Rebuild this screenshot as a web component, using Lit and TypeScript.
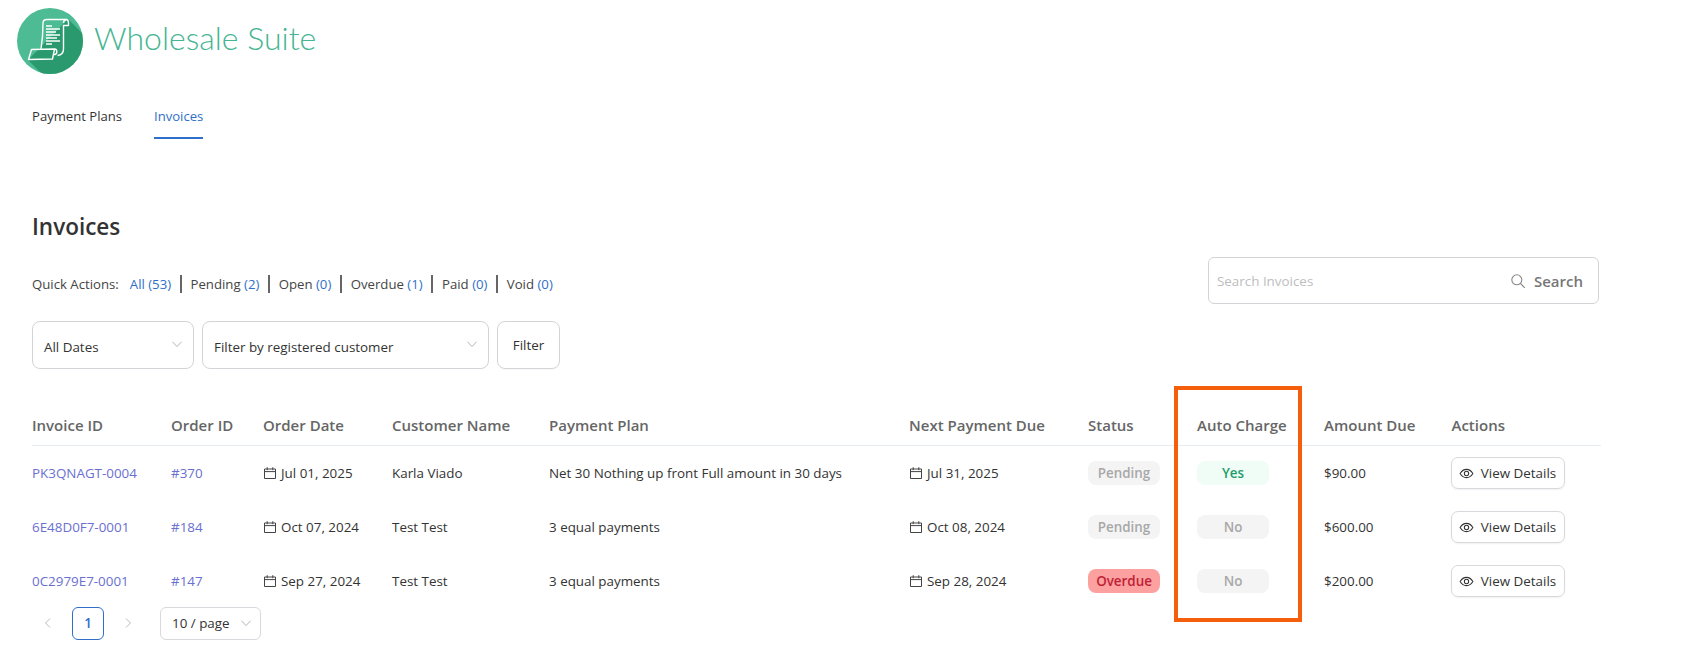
import { LitElement, html, css, svg } from "lit";
import { customElement } from "lit/decorators.js";

const chevron = svg`<svg class="chev" viewBox="0 0 12 12" width="12" height="12"><path d="M1.5 3.8 L6 8.6 L10.5 3.8" fill="none" stroke="#b5b5b5" stroke-width="1"/></svg>`;
const cal = svg`<svg class="cal" viewBox="0 0 14 14" width="14" height="14"><path d="M1.5 3h11v9.5h-11z M1.5 5.6h11 M4.2 1.2v3 M9.8 1.2v3" fill="none" stroke="#444" stroke-width="1"/></svg>`;
const eye = svg`<svg class="eye" viewBox="0 0 16 16" width="15" height="15"><path d="M1.2 8C3 5 5.3 3.6 8 3.6S13 5 14.8 8C13 11 10.7 12.4 8 12.4S3 11 1.2 8Z" fill="none" stroke="#333" stroke-width="1.1"/><circle cx="8" cy="8" r="2.3" fill="none" stroke="#333" stroke-width="1.1"/></svg>`;

const rows = [
  { inv: "PK3QNAGT-0004", ord: "#370", date: "Jul 01, 2025", cust: "Karla Viado", plan: "Net 30 Nothing up front Full amount in 30 days", next: "Jul 31, 2025", status: "Pending", auto: "Yes", amt: "$90.00" },
  { inv: "6E48D0F7-0001", ord: "#184", date: "Oct 07, 2024", cust: "Test Test", plan: "3 equal payments", next: "Oct 08, 2024", status: "Pending", auto: "No", amt: "$600.00" },
  { inv: "0C2979E7-0001", ord: "#147", date: "Sep 27, 2024", cust: "Test Test", plan: "3 equal payments", next: "Sep 28, 2024", status: "Overdue", auto: "No", amt: "$200.00" },
];
const quick = [["Pending", "(2)"], ["Open", "(0)"], ["Overdue", "(1)"], ["Paid", "(0)"], ["Void", "(0)"]];
const cols = [139, 92, 129, 157, 360, 179, 109, 127, 127.5, 149.5];
const heads = ["Invoice ID", "Order ID", "Order Date", "Customer Name", "Payment Plan", "Next Payment Due", "Status", "Auto Charge", "Amount Due", "Actions"];

@customElement("app-root")
export class AppRoot extends LitElement {
  static styles = css`
    :host { display: block; position: relative; height: 666px; overflow: hidden; background: #fff; color: #333;
      font-family: "Open Sans", "Noto Sans", sans-serif; font-size: 13.4px; }
    .logo { display: flex; align-items: center; gap: 10px; padding: 5px 0 0 16px; height: 70px; }
    .logo svg { display: block; }
    .brand { font-family: "Lato", sans-serif; font-weight: 300; font-size: 32px; color: #45b592; line-height: 1; margin-top: -4px; }
    .tabs { display: flex; gap: 32px; padding: 26px 0 0 32px; height: 38px; font-size: 13.1px; }
    .tab { height: 38px; line-height: 31px; color: #333; box-sizing: border-box; }
    .tab.on { color: #2f6fca; border-bottom: 2px solid #2f6fca; }
    h1 { margin: 73px 0 0 32px; font-size: 22.5px; line-height: 30px; font-weight: 600; color: #333; }
    .bar { display: flex; justify-content: space-between; align-items: flex-start; padding: 15px 97px 0 32px; height: 47px; }
    .quick { display: flex; align-items: center; height: 18px; margin-top: 18px; color: #444; font-size: 13.2px; }
    .quick .lbl { margin-right: 11px; }
    .quick b { font-weight: 400; color: #2f6fca; }
    .quick .item { padding: 0 8.7px; border-left: 2px solid #666; line-height: 18px; }
    .quick .first { padding: 0 8.7px 0 0; border: 0; }
    .search { width: 391px; height: 47px; box-sizing: border-box; border: 1px solid #d4d4d8; border-radius: 6px; display: flex; align-items: center; padding: 0 15px 0 8px; }
    .search .ph { flex: 1; color: #bdbdbd; }
    .search svg { margin-right: 8px; }
    .search .btn { font-weight: 600; font-size: 15px; color: #777; }
    .filters { display: flex; gap: 8px; padding: 17px 0 0 32px; height: 48px; }
    .sel { box-sizing: border-box; height: 48px; border: 1px solid #d4d4d8; border-radius: 8px; display: flex; align-items: center; justify-content: space-between; padding: 0 10px 0 11px; }
    .sel span { padding-top: 3px; }
    .sel svg { margin-bottom: 2px; }
    .sel.a { width: 162px; } .sel.b { width: 287px; }
    .fbtn { box-sizing: border-box; width: 63px; height: 48px; border: 1px solid #d4d4d8; border-radius: 8px; display: flex; align-items: center; justify-content: center; box-shadow: 0 1px 1px rgba(0,0,0,.03); }
    table { border-collapse: collapse; table-layout: fixed; width: 1569px; margin: 45px 0 0 32px; }
    th { text-align: left; font-weight: 600; font-size: 15px; color: #666; height: 22px; padding: 0 0 9px; border-bottom: 1px solid #e8edf2; }
    td { height: 54px; padding: 0; vertical-align: middle; }
    .link { color: #6a6fd0; }
    .date { display: flex; align-items: center; gap: 4px; }
    .pill { display: block; width: 72px; height: 24px; line-height: 25px; border-radius: 8px; text-align: center; font-weight: 600; box-sizing: border-box; }
    .pending, .no { background: #f4f4f5; color: #a8a8a8; }
    .yes { background: #effdf6; color: #1f9d6b; }
    .overdue { background: #fca0a0; color: #c01e35; }
    .view { box-sizing: border-box; width: 114px; height: 32px; margin-left: -1px; border: 1px solid #d9d9dd; border-radius: 7px; display: flex; align-items: center; justify-content: center; gap: 7px; box-shadow: 0 1px 2px rgba(0,0,0,.06); white-space: nowrap; }
    .pager { display: flex; align-items: center; padding: 0 0 0 40px; margin-top: -1px; height: 32px; }
    .arrow { width: 16px; display: flex; justify-content: center; }
    .page { box-sizing: border-box; width: 32px; height: 33px; border: 1px solid #2f6fca; border-radius: 6px; color: #2f6fca; font-weight: 600; display: flex; align-items: center; justify-content: center; margin: 0 16px; }
    .size { box-sizing: border-box; width: 101px; height: 33px; border: 1px solid #d9d9dd; border-radius: 6px; display: flex; align-items: center; justify-content: space-between; padding: 0 8px 0 11px; margin-left: 24px; white-space: nowrap; }
    .mark { position: absolute; left: 1174px; top: 386px; width: 128px; height: 236px; box-sizing: border-box; border: 4px solid #f55f0c; pointer-events: none; }
  `;

  logo() {
    return svg`<svg viewBox="16 4 68 68" width="68" height="68">
      <defs><clipPath id="c"><circle cx="50" cy="39" r="33"/></clipPath></defs>
      <circle cx="50" cy="39" r="33" fill="#4dbb94"/>
      <path clip-path="url(#c)" d="M68 17 L100 49 L100 100 L62 92 L28 58 Z" fill="#2a9a6e"/>
      <g fill="none" stroke="#fff" stroke-width="1.400" stroke-linejoin="round">
        <path d="M41 47 C42.500 38 43 27 43 21 C43 18.500 44.500 17.500 47 17.500 L66 17.500 C68 17.500 68.500 19 68.500 21 L68.500 23.500 L63.500 23.500 L63.500 47 C63.500 51 62 53 57.500 53.500"/>
        <path d="M63.500 21 C63.500 19 64.500 17.800 66 17.500"/>
        <path d="M31.500 47.500 L54.500 47 L52.500 57 L28.500 57.500 Z"/>
        <path d="M54.500 47 C57.500 47 57.500 52 55 52.500 L53 52.500"/>
      </g>
      <g stroke="#fff" stroke-width="1.300">
        <path d="M46 24h6 M46 27h14 M46 30h10 M46 33h14 M46 36h11 M46 39h14 M46 42h6"/>
      </g>
    </svg>`;
  }

  render() {
    return html`
      <div class="logo">${this.logo()}<span class="brand">Wholesale Suite</span></div>
      <div class="tabs"><div class="tab">Payment Plans</div><div class="tab on">Invoices</div></div>
      <h1>Invoices</h1>
      <div class="bar">
        <div class="quick">
          <span class="lbl">Quick Actions:</span>
          <span class="item first"><b>All (53)</b></span>
          ${quick.map(([n, c]) => html`<span class="item">${n} <b>${c}</b></span>`)}
        </div>
        <div class="search">
          <span class="ph">Search Invoices</span>
          <svg viewBox="0 0 16 16" width="16" height="16"><circle cx="6.800" cy="6.800" r="5" fill="none" stroke="#888" stroke-width="1.100"/><path d="M10.500 10.500 L14.800 14.800" stroke="#888" stroke-width="1.100"/></svg>
          <span class="btn">Search</span>
        </div>
      </div>
      <div class="filters">
        <div class="sel a"><span>All Dates</span>${chevron}</div>
        <div class="sel b"><span>Filter by registered customer</span>${chevron}</div>
        <div class="fbtn">Filter</div>
      </div>
      <table>
        <colgroup>${cols.map((w) => html`<col style="width:${w}px" />`)}</colgroup>
        <thead><tr>${heads.map((h) => html`<th>${h}</th>`)}</tr></thead>
        <tbody>
          ${rows.map((r) => html`<tr>
            <td class="link">${r.inv}</td>
            <td class="link">${r.ord}</td>
            <td><span class="date">${cal}${r.date}</span></td>
            <td>${r.cust}</td>
            <td>${r.plan}</td>
            <td><span class="date">${cal}${r.next}</span></td>
            <td><span class="pill ${r.status.toLowerCase()}">${r.status}</span></td>
            <td><span class="pill ${r.auto.toLowerCase()}">${r.auto}</span></td>
            <td>${r.amt}</td>
            <td><span class="view">${eye}View Details</span></td>
          </tr>`)}
        </tbody>
      </table>
      <div class="pager">
        <span class="arrow"><svg viewBox="0 0 12 12" width="12" height="12"><path d="M8 1.500 L3.500 6 L8 10.500" fill="none" stroke="#bbb"/></svg></span>
        <span class="page">1</span>
        <span class="arrow"><svg viewBox="0 0 12 12" width="12" height="12"><path d="M4 1.500 L8.500 6 L4 10.500" fill="none" stroke="#bbb"/></svg></span>
        <span class="size"><span>10 / page</span>${chevron}</span>
      </div>
      <div class="mark"></div>
    `;
  }
}
